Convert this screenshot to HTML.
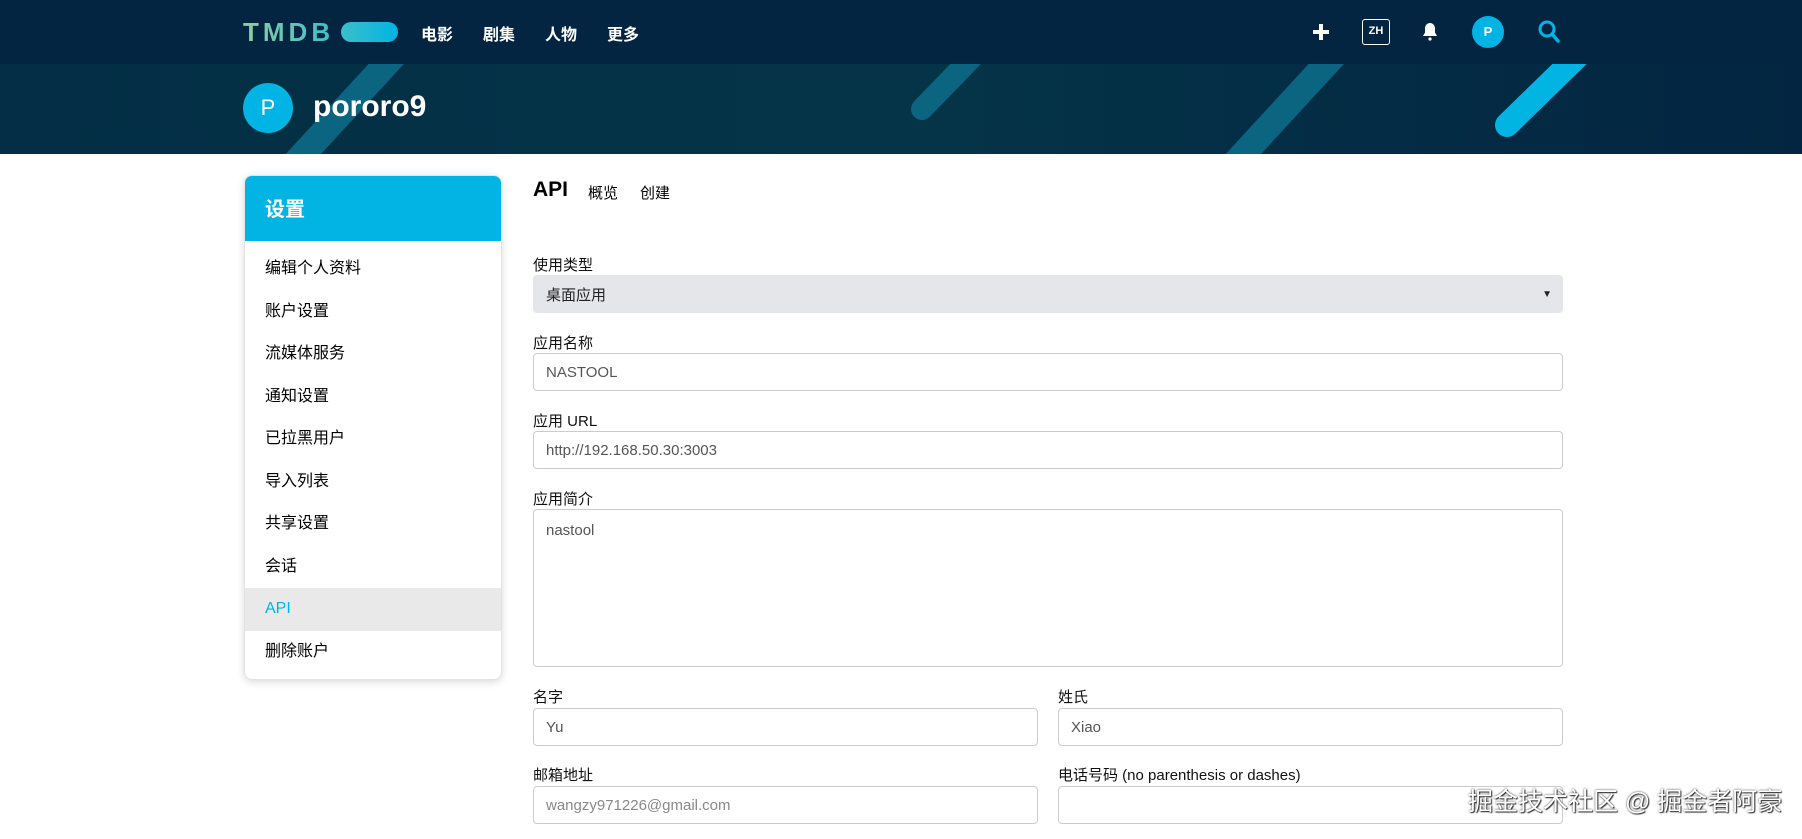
<!DOCTYPE html>
<html><head><meta charset="utf-8"><style>
*{box-sizing:border-box;margin:0;padding:0}
body{width:1802px;height:839px;overflow:hidden;background:#fff;font-family:"Liberation Sans","Noto Sans CJK SC",sans-serif;color:#000;position:relative}
.top{position:absolute;left:0;top:0;width:1802px;height:64px;background:#032541}
.banner{position:absolute;left:0;top:64px;width:1802px;height:90px;background:linear-gradient(90deg,#032e45,#053448 50%,#032541);overflow:hidden}
.abs{position:absolute}
.nav{color:#fff;font-weight:bold;font-size:16px;top:21px}
.card{position:absolute;left:244px;top:175px;width:258px;height:505px;border-radius:8px;box-shadow:0 2px 8px rgba(0,0,0,.15);border:1px solid #e3e3e3;overflow:hidden;background:#fff}
.card .hd{height:65px;background:#01b4e4;color:#fff;font-weight:bold;font-size:20px;padding:17px 20px}
.card .it{height:42.5px;line-height:42.5px;padding-left:20px;font-size:16px;color:#000}
.card .it.on{background:#e9e9e9;color:#01b4e4}
.lbl{position:absolute;font-size:15px;color:#111}
.inp{position:absolute;border:1px solid #ccc;border-radius:4px;background:#fff;font-size:15px;color:#555;padding-left:12px;display:flex;align-items:center}
</style></head><body>
<div class="top">
  <div class="abs" style="left:243px;top:17px;font-size:26px;font-weight:bold;letter-spacing:4px;background:linear-gradient(90deg,#90cea1,#3cbec9);-webkit-background-clip:text;color:transparent;line-height:30px">TMDB</div>
  <div class="abs" style="left:341px;top:22px;width:57px;height:20px;border-radius:10px;background:linear-gradient(90deg,#3cbec9,#01b4e4)"></div>
  <div class="abs nav" style="left:421px">电影</div>
  <div class="abs nav" style="left:483px">剧集</div>
  <div class="abs nav" style="left:545px">人物</div>
  <div class="abs nav" style="left:607px">更多</div>
  <div class="abs" style="left:1313px;top:30px;width:16px;height:4px;background:#fff"></div>
  <div class="abs" style="left:1319px;top:24px;width:4px;height:16px;background:#fff"></div>
  <div class="abs" style="left:1362px;top:19px;width:28px;height:26px;border:1.5px solid #fff;border-radius:3px;color:#fff;font-size:11px;font-weight:bold;text-align:center;line-height:23px">ZH</div>
  <svg class="abs" style="left:1422px;top:22px" width="16" height="20" viewBox="0 0 16 20"><path d="M8 1c-3 0-5 2.5-5 5.5v4L1 14h14l-2-3.5v-4C13 3.5 11 1 8 1z" fill="#fff"/><circle cx="8" cy="17" r="1.6" fill="#fff"/></svg>
  <div class="abs" style="left:1472px;top:16px;width:32px;height:32px;border-radius:50%;background:#01b4e4;color:#fff;font-size:13px;font-weight:bold;text-align:center;line-height:32px">P</div>
  <svg class="abs" style="left:1537px;top:19px" width="24" height="26" viewBox="0 0 24 26"><circle cx="10" cy="10" r="7" fill="none" stroke="#01b4e4" stroke-width="3"/><path d="M15 15l6 7" stroke="#01b4e4" stroke-width="3.5" stroke-linecap="round"/></svg>
</div>
<div class="banner">
  <svg width="1802" height="90" style="position:absolute;left:0;top:0">
    <line x1="400" y1="-15" x2="285" y2="110" stroke="#0b6480" stroke-width="26"/>
    <line x1="985" y1="-20" x2="922" y2="45" stroke="#0b6480" stroke-width="22" stroke-linecap="round"/>
    <line x1="1340" y1="-15" x2="1225" y2="110" stroke="#0b6480" stroke-width="26"/>
    <line x1="1590" y1="-20" x2="1507" y2="61" stroke="#01b4e4" stroke-width="24" stroke-linecap="round"/>
  </svg>
  <div class="abs" style="left:243px;top:19px;width:50px;height:50px;border-radius:50%;background:#01b4e4;color:#fff;font-size:22px;text-align:center;line-height:50px">P</div>
  <div class="abs" style="left:313px;top:25px;color:#fff;font-size:30px;font-weight:bold;line-height:36px">pororo9</div>
</div>
<div class="card">
  <div class="hd">设置</div>
  <div style="height:7px"></div>
  <div class="it">编辑个人资料</div><div class="it">账户设置</div><div class="it">流媒体服务</div><div class="it">通知设置</div><div class="it">已拉黑用户</div><div class="it">导入列表</div><div class="it">共享设置</div><div class="it">会话</div><div class="it on">API</div><div class="it">删除账户</div>
</div>
<div class="abs" style="left:533px;top:178px;font-size:21px;font-weight:bold">API</div>
<div class="abs" style="left:588px;top:182px;font-size:15px">概览</div>
<div class="abs" style="left:640px;top:182px;font-size:15px">创建</div>
<div class="lbl" style="left:533px;top:254px">使用类型</div>
<div class="inp" style="left:533px;top:275px;width:1030px;height:38px;background:#e4e6e9;border-color:#e4e6e9;color:#222">桌面应用<span style="position:absolute;right:10px;font-size:10px">▼</span></div>
<div class="lbl" style="left:533px;top:332px">应用名称</div>
<div class="inp" style="left:533px;top:353px;width:1030px;height:38px">NASTOOL</div>
<div class="lbl" style="left:533px;top:410px">应用 URL</div>
<div class="inp" style="left:533px;top:431px;width:1030px;height:38px">http://192.168.50.30:3003</div>
<div class="lbl" style="left:533px;top:488px">应用简介</div>
<div class="inp" style="left:533px;top:509px;width:1030px;height:158px;align-items:flex-start;padding-top:12px">nastool</div>
<div class="lbl" style="left:533px;top:686px">名字</div>
<div class="inp" style="left:533px;top:708px;width:505px;height:38px">Yu</div>
<div class="lbl" style="left:1058px;top:686px">姓氏</div>
<div class="inp" style="left:1058px;top:708px;width:505px;height:38px">Xiao</div>
<div class="lbl" style="left:533px;top:764px">邮箱地址</div>
<div class="inp" style="left:533px;top:786px;width:505px;height:38px;color:#888">wangzy971226@gmail.com</div>
<div class="lbl" style="left:1058px;top:764px">电话号码 (no parenthesis or dashes)</div>
<div class="inp" style="left:1058px;top:786px;width:505px;height:38px"></div>
<div class="abs" style="left:1468px;top:786px;font-size:25px;color:#fff;text-shadow:0 0 2px #333,1px 1px 1px #333;line-height:32px">掘金技术社区 @ 掘金者阿豪</div>
</body></html>
